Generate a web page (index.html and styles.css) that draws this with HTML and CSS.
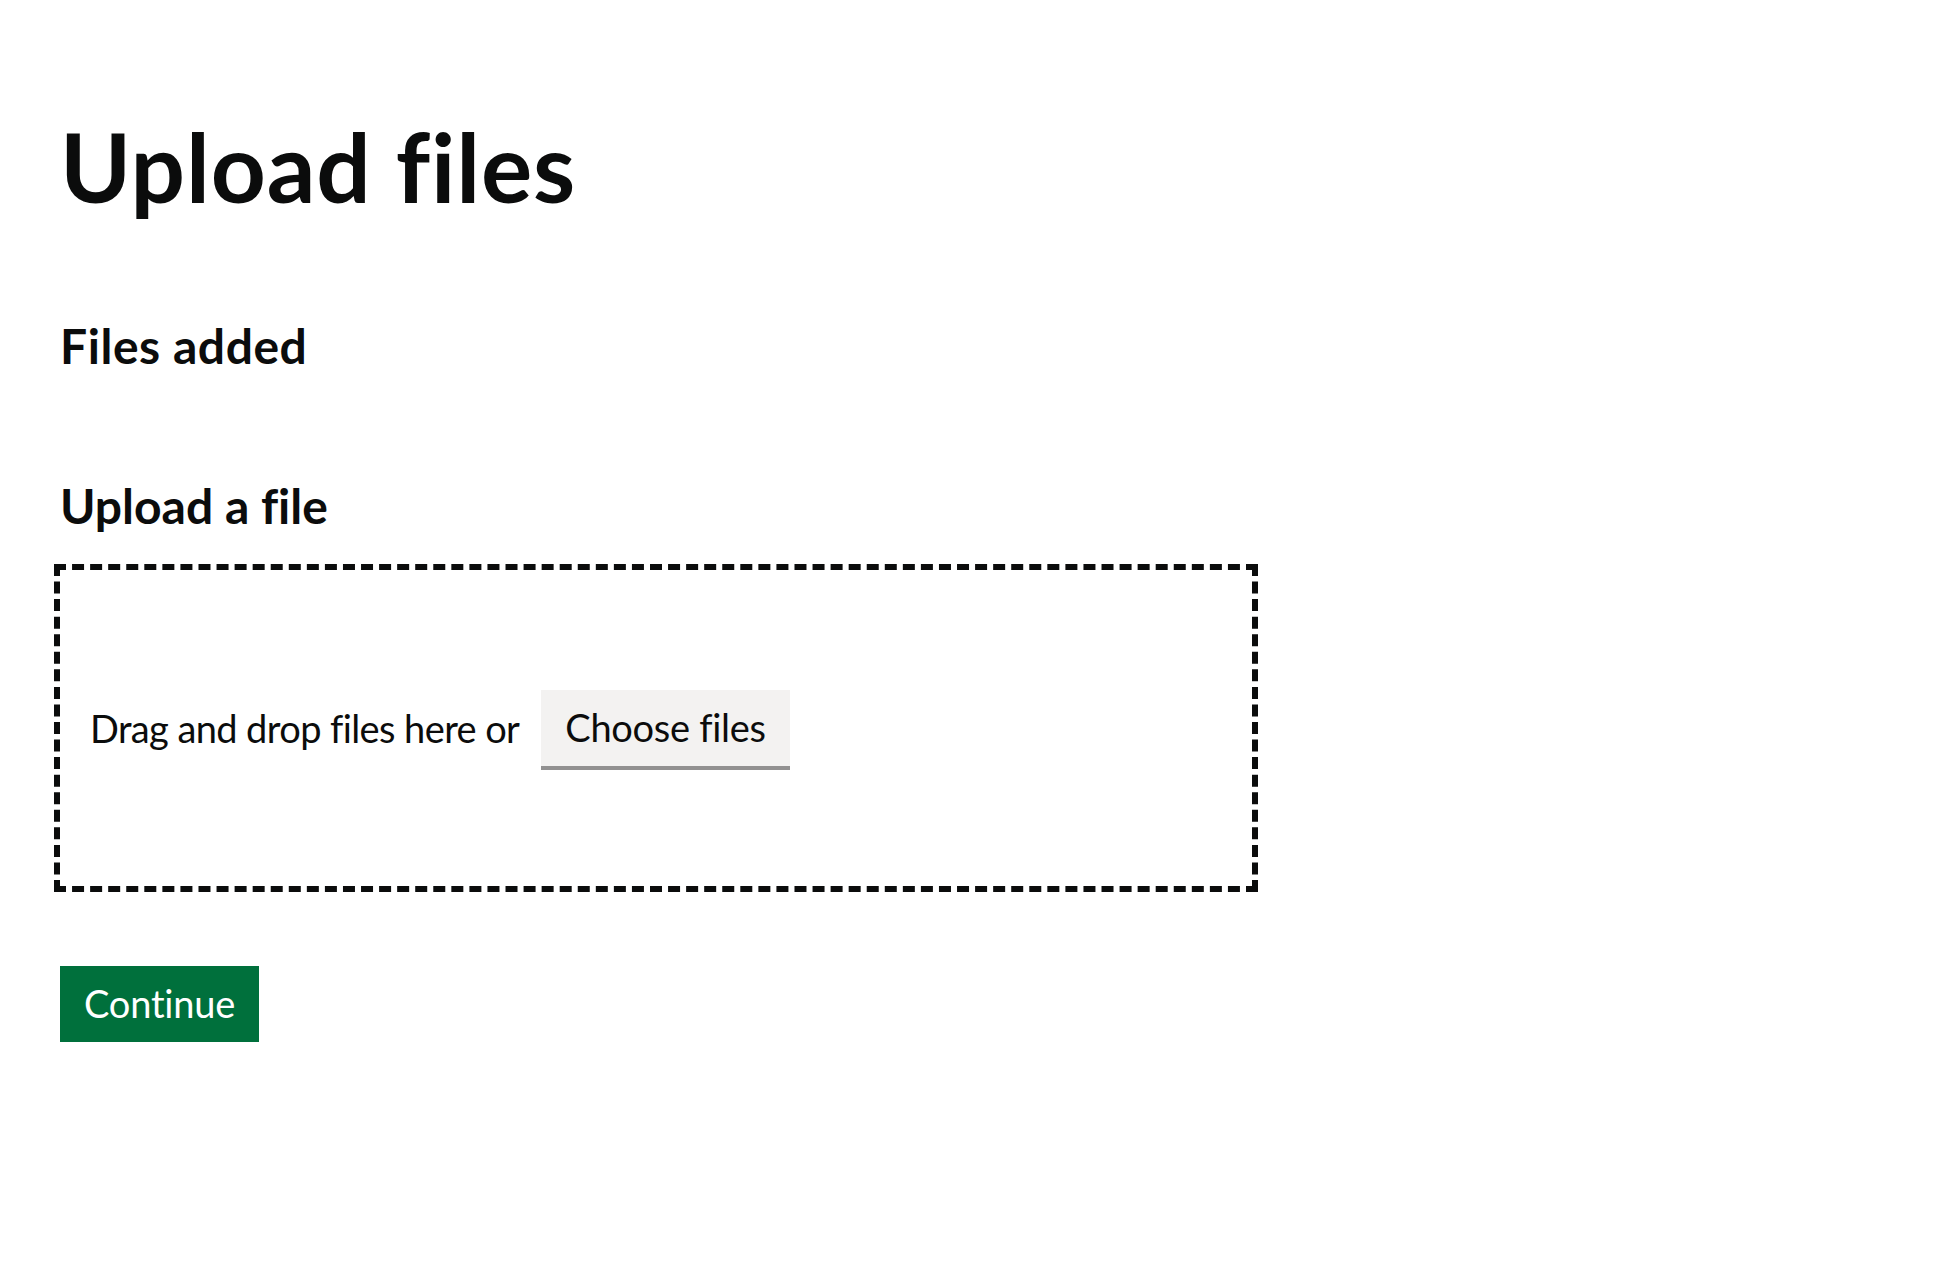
FILE: index.html
```html
<!DOCTYPE html>
<html lang="en">
<head>
<meta charset="utf-8">
<title>Upload files</title>
<link rel="stylesheet" href="styles.css">
</head>
<body>
<div class="width-container">
  <main class="main">
    <div class="column">
      <h1 class="heading-xl">Upload files</h1>
      <h2 class="heading-m files-added">Files added</h2>
      <div class="form-group">
        <label class="heading-m label">Upload a file</label>
        <div class="dropzone">
          <span class="dropzone-text">Drag and drop files here or</span>
          <button class="button-secondary" type="button">Choose files</button>
        </div>
      </div>
      <button class="button-primary" type="submit">Continue</button>
    </div>
  </main>
</div>
</body>
</html>
```

FILE: styles.css
```css
html, body {
  margin: 0;
  padding: 0;
  background: #ffffff;
}

body {
  font-family: Lato, "Liberation Sans", sans-serif;
  color: #0b0c0c;
  font-variant-ligatures: none;
  font-feature-settings: "liga" 0;
}

.width-container {
  padding: 0 60px;
}

.main {
  padding-top: 116px;
}

.column {
  width: 1192px;
}

.heading-xl {
  margin: 0 0 100px;
  font-size: 96px;
  line-height: 100px;
  font-weight: 700;
  letter-spacing: 0.85px;
}

.heading-m {
  margin: 0;
  font-size: 48px;
  line-height: 60px;
  font-weight: 700;
  display: block;
}

.files-added {
  margin-bottom: 100px;
  letter-spacing: 0.55px;
}

.label {
  margin-bottom: 33.5px;
}

.dropzone {
  outline: 6px dashed #0b0c0c;
  padding: 120px 30px;
  display: flex;
  align-items: center;
  gap: 22px;
}

.dropzone-text {
  font-size: 38px;
  line-height: 38px;
  letter-spacing: -0.6px;
}

.button-secondary,
.button-primary {
  font-family: Lato, "Liberation Sans", sans-serif;
  font-variant-ligatures: none;
  font-feature-settings: "liga" 0;
  font-size: 38px;
  line-height: 38px;
  font-weight: 400;
  padding: 14px 20px 16px;
  border: 4px solid transparent;
  border-radius: 0;
  margin: 0;
  cursor: pointer;
}

.button-secondary {
  background: #f3f2f1;
  color: #0b0c0c;
  box-shadow: 0 4px 0 #929191;
  letter-spacing: -0.3px;
}

.form-group {
  margin-bottom: 80px;
}

.button-primary {
  background: #00703c;
  color: #ffffff;
  box-shadow: 0 4px 0 #002d18;
  letter-spacing: -0.2px;
}
```
